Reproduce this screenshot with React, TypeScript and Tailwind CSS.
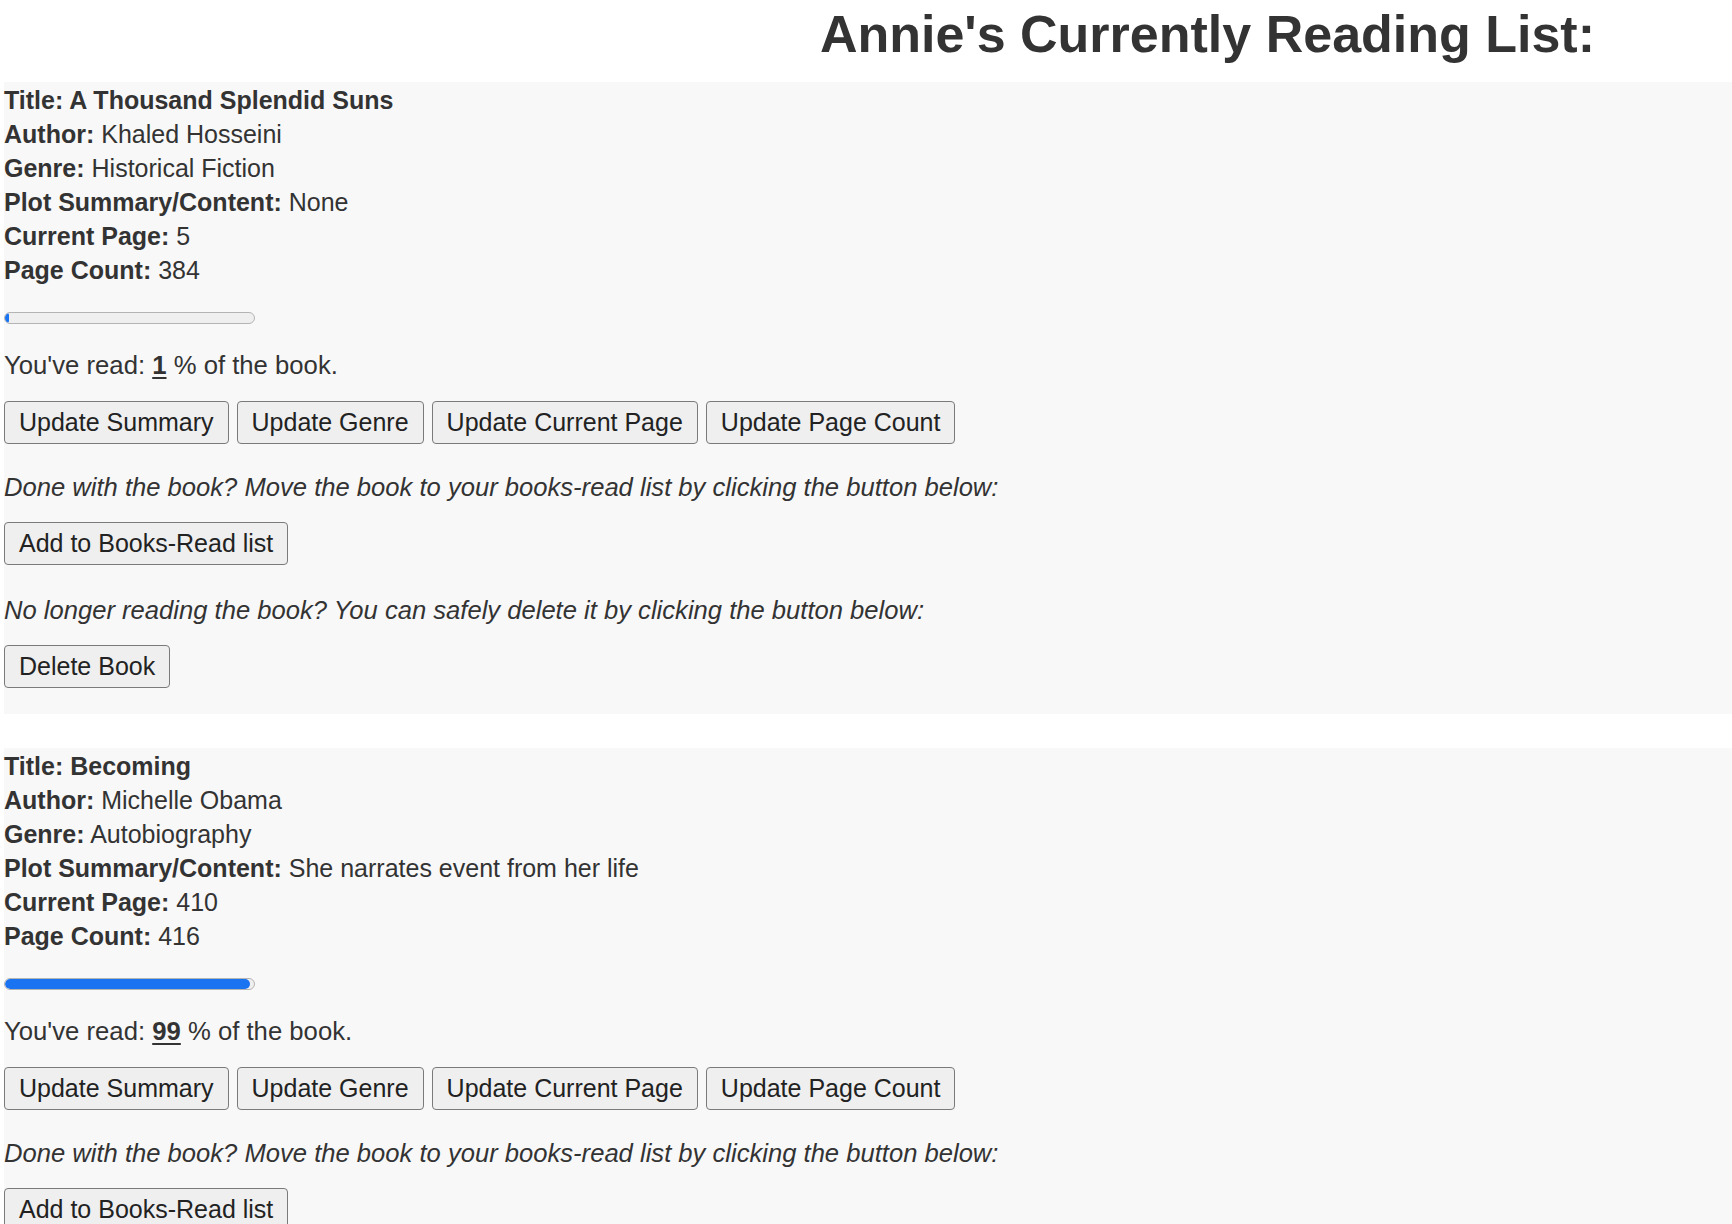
import React from 'react';

interface Book {
  title: string;
  author: string;
  genre: string;
  summary: string;
  currentPage: number;
  pageCount: number;
}

const BOOKS: Book[] = [
  {
    title: 'A Thousand Splendid Suns',
    author: 'Khaled Hosseini',
    genre: 'Historical Fiction',
    summary: 'None',
    currentPage: 5,
    pageCount: 384,
  },
  {
    title: 'Becoming',
    author: 'Michelle Obama',
    genre: 'Autobiography',
    summary: 'She narrates event from her life',
    currentPage: 410,
    pageCount: 416,
  },
];

const FONT = { fontFamily: '"Liberation Sans", Arial, Helvetica, sans-serif' };

function Btn({ children }: { children: React.ReactNode }) {
  return (
    <button className="h-[43px] px-[14px] bg-[#efefef] border-[1.5px] border-[#7a7a7a] rounded-[4px] text-[25px] leading-none text-[#222] whitespace-nowrap">
      {children}
    </button>
  );
}

function BookCard({ book }: { book: Book }) {
  const pct = Math.round((book.currentPage / book.pageCount) * 100);
  const fill = (book.currentPage / book.pageCount) * 100;

  return (
    <div className="ml-[4px] pt-[1px] bg-[#f8f8f8] text-[25px] leading-[34px] text-[#333]">
      <div className="font-bold">Title: {book.title}</div>
      <div>
        <b>Author:</b> {book.author}
      </div>
      <div>
        <b>Genre:</b> {book.genre}
      </div>
      <div>
        <b>Plot Summary/Content:</b> {book.summary}
      </div>
      <div>
        <b>Current Page:</b> {book.currentPage}
      </div>
      <div>
        <b>Page Count:</b> {book.pageCount}
      </div>

      <div className="mt-[25px] w-[251px] h-[12px] rounded-full border border-[#b4b4b4] bg-[#efefef] overflow-hidden">
        <div className="h-full bg-[#1a73f0] rounded-full" style={{ width: `${Math.max(fill, 1.5)}%` }} />
      </div>

      <div className="mt-[24px] text-[25.7px]">
        You've read: <b className="underline underline-offset-[3px]">{pct}</b> % of the book.
      </div>

      <div className="mt-[19px] flex gap-[8px]">
        <Btn>Update Summary</Btn>
        <Btn>Update Genre</Btn>
        <Btn>Update Current Page</Btn>
        <Btn>Update Page Count</Btn>
      </div>

      <p className="mt-[26px] italic text-[25.6px]">
        Done with the book? Move the book to your books-read list by clicking the button below:
      </p>
      <div className="mt-[18px]">
        <Btn>Add to Books-Read list</Btn>
      </div>

      <p className="mt-[28px] italic text-[25.6px]">
        No longer reading the book? You can safely delete it by clicking the button below:
      </p>
      <div className="mt-[18px] pb-[26px]">
        <Btn>Delete Book</Btn>
      </div>
    </div>
  );
}

export default function App() {
  return (
    <div className="min-h-screen bg-white" style={FONT}>
      <div className="flex justify-end pr-[137px] pt-[6px] mb-[19px]">
        <h1 className="text-[52px] leading-[57px] font-bold text-[#333]">Annie's Currently Reading List:</h1>
      </div>
      <div className="flex flex-col gap-[34px]">
        {BOOKS.map((book) => (
          <BookCard key={book.title} book={book} />
        ))}
      </div>
    </div>
  );
}
